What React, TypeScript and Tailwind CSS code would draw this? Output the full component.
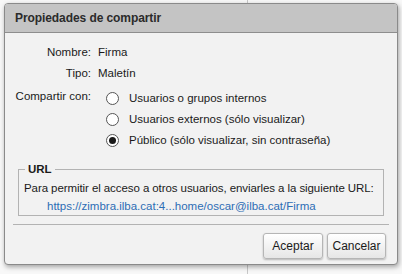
import React from 'react';

const font = { fontFamily: '"Liberation Sans", Arial, sans-serif' };

const Radio = ({ checked }: { checked?: boolean }) => (
  <span className="w-[13px] h-[13px] rounded-full border border-[#555] bg-white flex items-center justify-center shrink-0">
    {checked && <span className="w-[7px] h-[7px] rounded-full bg-[#1a1a1a]" />}
  </span>
);

const options = [
  { label: 'Usuarios o grupos internos', checked: false },
  { label: 'Usuarios externos (sólo visualizar)', checked: false },
  { label: 'Público (sólo visualizar, sin contraseña)', checked: true },
];

export default function App() {
  return (
    <div className="w-[402px] h-[274px] bg-[#f8f8f8] relative overflow-hidden text-[#1a1a1a]" style={font}>
      {/* page behind the dialog */}
      <div className="absolute left-[247px] top-0 h-full w-px bg-[#c8c8c8]" />

      <div className="relative ml-[4px] mt-[3px] w-[394px] h-[262px] border border-[#8a8a8a] rounded-[4px] bg-[#f2f2f2] overflow-hidden shadow-[1px_2px_5px_rgba(0,0,0,0.35)] flex flex-col">
        {/* Title bar */}
        <div className="h-[29px] shrink-0 bg-[#c4c4c4] border-b border-[#8e8e8e] px-[10px] flex items-center">
          <span className="text-[12px] font-bold text-[#2b2b2b] tracking-[-0.08px]">Propiedades de compartir</span>
        </div>

        {/* Body */}
        <div className="flex-1 pt-[9px] text-[11.5px]">
          <div className="flex h-[21px] items-center">
            <span className="w-[86px] text-right">Nombre:</span>
            <span className="ml-[7px]">Firma</span>
          </div>
          <div className="flex h-[21px] items-center">
            <span className="w-[86px] text-right">Tipo:</span>
            <span className="ml-[7px]">Maletín</span>
          </div>
          <div className="flex mt-[4px]">
            <span className="w-[86px] text-right leading-[15px] pt-[1px]">Compartir con:</span>
            <div className="ml-[15px] flex flex-col">
              {options.map((o) => (
                <div key={o.label} className="flex items-center h-[21px] gap-[10px]">
                  <Radio checked={o.checked} />
                  <span>{o.label}</span>
                </div>
              ))}
            </div>
          </div>

          {/* URL group */}
          <fieldset className="mx-[13px] mt-[12px] border border-[#b3b3b3] px-[5px] h-[53px]">
            <legend className="font-bold px-[3px] ml-[1px] leading-[12px]">URL</legend>
            <div className="mt-[5px] leading-[16px] whitespace-nowrap tracking-[-0.08px]">Para permitir el acceso a otros usuarios, enviarles a la siguiente URL:</div>
            <div className="pl-[23px] mt-[2px] leading-[16px] text-[#2d6db5] whitespace-nowrap">https://zimbra.ilba.cat:4...home/oscar@ilba.cat/Firma</div>
          </fieldset>

          <div className="mx-[8px] mt-[8px] border-t border-[#b3b3b3]" />

          {/* Buttons */}
          <div className="flex justify-end gap-[4px] pr-[11px] mt-[8px]">
            <button className="h-[26px] w-[60px] rounded-[3px] border border-[#b5b5b5] bg-gradient-to-b from-white to-[#e6e6e6] shadow-[0_1px_2px_rgba(0,0,0,0.25)] text-[12px] text-[#1a1a1a]">
              Aceptar
            </button>
            <button className="h-[26px] w-[59px] rounded-[3px] border border-[#b5b5b5] bg-gradient-to-b from-white to-[#e6e6e6] shadow-[0_1px_2px_rgba(0,0,0,0.25)] text-[12px] text-[#1a1a1a]">
              Cancelar
            </button>
          </div>
        </div>
      </div>
    </div>
  );
}
